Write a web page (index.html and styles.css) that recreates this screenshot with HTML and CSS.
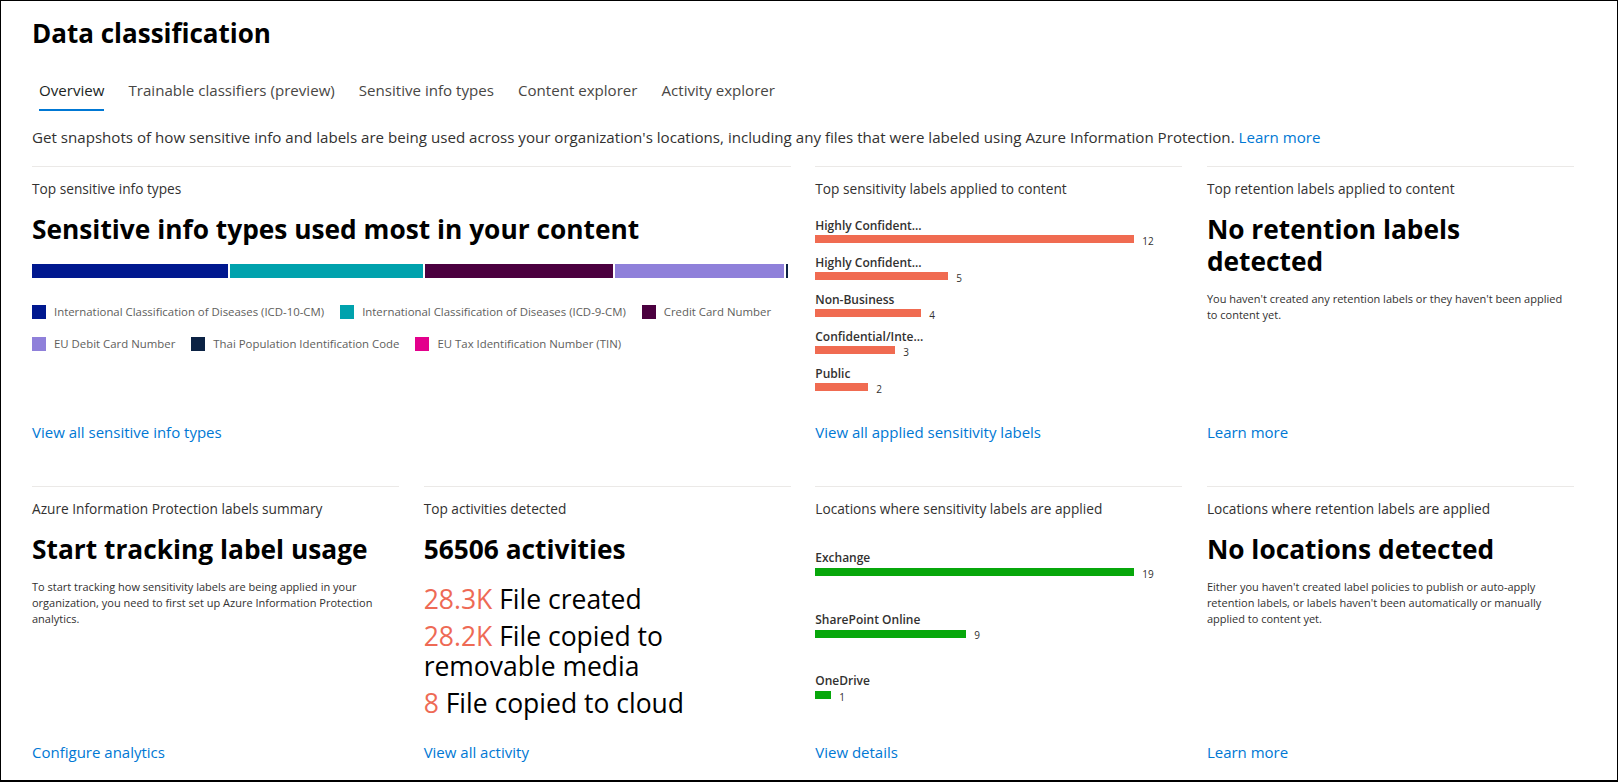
FILE: index.html
```html
<!DOCTYPE html>
<html lang="en">
<head>
<meta charset="utf-8">
<title>Data classification</title>
<link rel="stylesheet" href="styles.css">
</head>
<body>
<div class="frame">
  <h1 class="page-title">Data classification</h1>
  <nav class="pivot">
    <a class="pivot-item is-active">Overview</a>
    <a class="pivot-item">Trainable classifiers (preview)</a>
    <a class="pivot-item">Sensitive info types</a>
    <a class="pivot-item">Content explorer</a>
    <a class="pivot-item">Activity explorer</a>
  </nav>
  <p class="intro">Get snapshots of how sensitive info and labels are being used across your organization's locations, including any files that were labeled using Azure Information Protection. <a class="link">Learn more</a></p>

  <div class="cards">
    <section class="card card--wide">
      <h2 class="card-title">Top sensitive info types</h2>
      <h3 class="card-heading">Sensitive info types used most in your content</h3>
      <div class="stack-bar">
        <span class="seg sw-1" style="width:196px"></span>
        <span class="seg sw-2" style="width:193px"></span>
        <span class="seg sw-3" style="width:188px"></span>
        <span class="seg sw-4" style="width:169px"></span>
        <span class="seg sw-5" style="width:2px"></span>
      </div>
      <div class="legend">
        <div class="legend-row">
          <span class="legend-item"><i class="swatch sw-1"></i>International Classification of Diseases (ICD-10-CM)</span>
          <span class="legend-item"><i class="swatch sw-2"></i>International Classification of Diseases (ICD-9-CM)</span>
          <span class="legend-item"><i class="swatch sw-3"></i>Credit Card Number</span>
        </div>
        <div class="legend-row">
          <span class="legend-item"><i class="swatch sw-4"></i>EU Debit Card Number</span>
          <span class="legend-item"><i class="swatch sw-5"></i>Thai Population Identification Code</span>
          <span class="legend-item"><i class="swatch sw-6"></i>EU Tax Identification Number (TIN)</span>
        </div>
      </div>
      <a class="link card-link">View all sensitive info types</a>
    </section>

    <section class="card">
      <h2 class="card-title">Top sensitivity labels applied to content</h2>
      <div class="hbars hbars--tight">
        <div class="hbar">
          <div class="hbar-label">Highly Confident...</div>
          <div class="hbar-track"><span class="hbar-fill fill-orange" style="width:319px"></span><span class="hbar-val">12</span></div>
        </div>
        <div class="hbar">
          <div class="hbar-label">Highly Confident...</div>
          <div class="hbar-track"><span class="hbar-fill fill-orange" style="width:133px"></span><span class="hbar-val">5</span></div>
        </div>
        <div class="hbar">
          <div class="hbar-label">Non-Business</div>
          <div class="hbar-track"><span class="hbar-fill fill-orange" style="width:106px"></span><span class="hbar-val">4</span></div>
        </div>
        <div class="hbar">
          <div class="hbar-label">Confidential/Inte...</div>
          <div class="hbar-track"><span class="hbar-fill fill-orange" style="width:80px"></span><span class="hbar-val">3</span></div>
        </div>
        <div class="hbar">
          <div class="hbar-label">Public</div>
          <div class="hbar-track"><span class="hbar-fill fill-orange" style="width:53px"></span><span class="hbar-val">2</span></div>
        </div>
      </div>
      <a class="link card-link">View all applied sensitivity labels</a>
    </section>

    <section class="card">
      <h2 class="card-title">Top retention labels applied to content</h2>
      <h3 class="card-heading">No retention labels detected</h3>
      <p class="card-desc">You haven't created any retention labels or they haven't been applied to content yet.</p>
      <a class="link card-link">Learn more</a>
    </section>

    <section class="card">
      <h2 class="card-title">Azure Information Protection labels summary</h2>
      <h3 class="card-heading">Start tracking label usage</h3>
      <p class="card-desc">To start tracking how sensitivity labels are being applied in your organization, you need to first set up Azure Information Protection analytics.</p>
      <a class="link card-link">Configure analytics</a>
    </section>

    <section class="card">
      <h2 class="card-title">Top activities detected</h2>
      <h3 class="card-heading">56506 activities</h3>
      <ul class="activities">
        <li class="activity"><span class="activity-num">28.3K</span> File created</li>
        <li class="activity"><span class="activity-num">28.2K</span> File copied to removable media</li>
        <li class="activity"><span class="activity-num">8</span> File copied to cloud</li>
      </ul>
      <a class="link card-link">View all activity</a>
    </section>

    <section class="card">
      <h2 class="card-title">Locations where sensitivity labels are applied</h2>
      <div class="hbars hbars--loose">
        <div class="hbar">
          <div class="hbar-label">Exchange</div>
          <div class="hbar-track"><span class="hbar-fill fill-green" style="width:319px"></span><span class="hbar-val">19</span></div>
        </div>
        <div class="hbar">
          <div class="hbar-label">SharePoint Online</div>
          <div class="hbar-track"><span class="hbar-fill fill-green" style="width:151px"></span><span class="hbar-val">9</span></div>
        </div>
        <div class="hbar">
          <div class="hbar-label">OneDrive</div>
          <div class="hbar-track"><span class="hbar-fill fill-green" style="width:16px"></span><span class="hbar-val">1</span></div>
        </div>
      </div>
      <a class="link card-link">View details</a>
    </section>

    <section class="card">
      <h2 class="card-title">Locations where retention labels are applied</h2>
      <h3 class="card-heading">No locations detected</h3>
      <p class="card-desc">Either you haven't created label policies to publish or auto-apply retention labels, or labels haven't been automatically or manually applied to content yet.</p>
      <a class="link card-link">Learn more</a>
    </section>
  </div>
</div>
</body>
</html>
```

FILE: styles.css
```css
* { box-sizing: border-box; }

html, body {
  margin: 0;
  padding: 0;
  background: #fff;
}

body {
  font-family: "Open Sans", "Noto Sans", sans-serif;
  color: #323130;
}

.frame {
  width: 1618px;
  height: 782px;
  border: 1px solid #000;
  border-bottom-width: 2px;
  padding: 14px 43px 0 31px;
  overflow: hidden;
}

.page-title {
  margin: 0;
  font-size: 26px;
  line-height: 36px;
  font-weight: 700;
  color: #000;
}

.pivot {
  display: flex;
  margin: 17px 0 0 -1px;
  height: 44px;
}

.pivot-item {
  position: relative;
  padding: 0 8px;
  margin-right: 8px;
  font-size: 15.1px;
  line-height: 44px;
  color: #484644;
  white-space: nowrap;
}

.pivot-item.is-active {
  color: #201f1e;
}

.pivot-item.is-active::after {
  content: "";
  position: absolute;
  left: 8px;
  right: 8px;
  bottom: 1px;
  height: 2px;
  background: #0078d4;
}

.intro {
  margin: 15px 0 0;
  font-size: 15.12px;
  line-height: 20px;
  color: #323130;
  white-space: nowrap;
}

.link {
  color: #0078d4;
  text-decoration: none;
  cursor: pointer;
}

.cards {
  display: grid;
  width: 1542px;
  grid-template-columns: repeat(4, 1fr);
  column-gap: 24.5px;
  row-gap: 44px;
  margin-top: 19px;
}

.card {
  display: flex;
  flex-direction: column;
  align-items: flex-start;
  height: 276px;
  border-top: 1px solid #ebe9e7;
  padding-top: 13px;
  min-width: 0;
}

.card--wide {
  grid-column: span 2;
}

.card-title {
  margin: 0;
  font-size: 13.7px;
  line-height: 18px;
  font-weight: 400;
  color: #323130;
  white-space: nowrap;
}

.card-heading {
  margin: 15px 0 0;
  font-size: 26.3px;
  line-height: 32px;
  font-weight: 700;
  color: #000;
}

.card-link {
  margin-top: auto;
  font-size: 15px;
  line-height: 20px;
}

.card-desc {
  margin: 14px 0 0;
  font-size: 11px;
  line-height: 16px;
  color: #323130;
}

/* stacked bar */
.stack-bar {
  display: flex;
  gap: 2px;
  height: 14px;
  margin-top: 19px;
}

.seg {
  display: block;
  height: 14px;
  flex: none;
}

.sw-1 { background: #00188f; }
.sw-2 { background: #00a2ad; }
.sw-3 { background: #4b003f; }
.sw-4 { background: #8f80da; }
.sw-5 { background: #0b2244; }
.sw-6 { background: #e3008c; }

.legend {
  display: flex;
  flex-direction: column;
  gap: 18px;
  margin-top: 27px;
}

.legend-row {
  display: flex;
  gap: 16px;
}

.legend-item {
  display: flex;
  align-items: center;
  flex: none;
  gap: 8px;
  height: 14px;
  font-size: 11.4px;
  line-height: 14px;
  color: #605e5c;
  white-space: nowrap;
}

.swatch {
  display: block;
  width: 14px;
  height: 14px;
}

/* horizontal bar list */
.hbars {
  display: flex;
  flex-direction: column;
  width: 100%;
}

.hbars--tight {
  margin-top: 20px;
  gap: 12px;
}

.hbars--loose {
  margin-top: 32px;
  gap: 35.5px;
}

.hbar-label {
  font-size: 12px;
  line-height: 16px;
  font-weight: 600;
  color: #323130;
  white-space: nowrap;
}

.hbars--tight .hbar-label { margin-bottom: 1px; }
.hbars--loose .hbar-label { margin-bottom: 2px; }

.hbar-track {
  display: flex;
  align-items: center;
  height: 8px;
  gap: 8px;
}

.hbar-fill {
  display: block;
  height: 8px;
  flex: none;
}

.fill-orange { background: #f06b51; }
.fill-green { background: #07a70b; }

.hbar-val {
  font-size: 10px;
  line-height: 10px;
  margin-top: 3px;
  color: #323130;
}

/* activities */
.activities {
  list-style: none;
  margin: 19px 0 0;
  padding: 0;
  display: flex;
  flex-direction: column;
  gap: 6px;
}

.activity {
  font-size: 26.5px;
  line-height: 30.5px;
  color: #000;
}

.activity-num {
  color: #ee6a55;
}
```
